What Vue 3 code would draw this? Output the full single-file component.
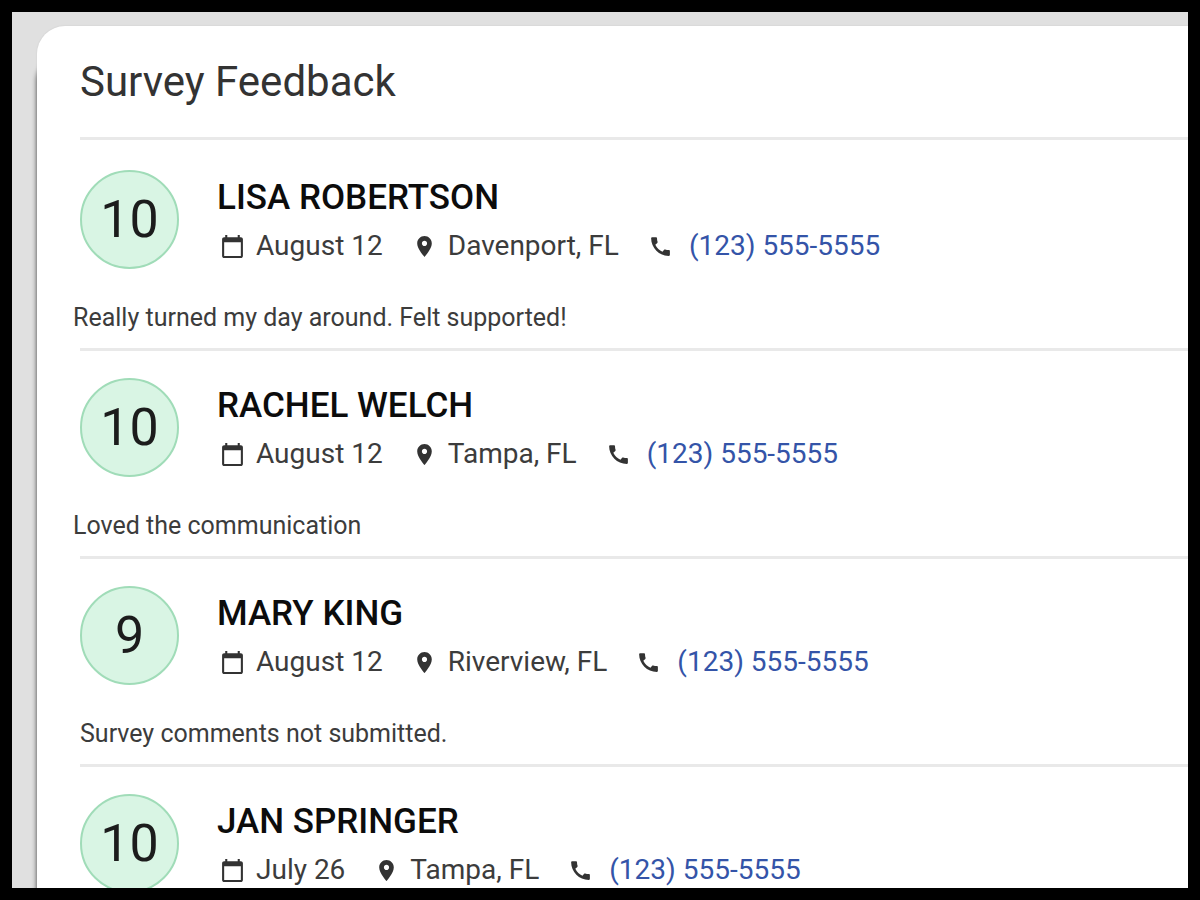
<template>
  <main class="frame">
    <section class="card">
      <h1 class="title">Survey Feedback</h1>
      <ul class="list">
        <li v-for="item in feedback" :key="item.name" class="row">
          <div class="summary">
            <div class="score">{{ item.score }}</div>
            <div class="person">
              <h2 class="name">{{ item.name }}</h2>
              <div class="meta">
                <span class="meta-item">
                  <svg class="icon" viewBox="0 0 24 24" aria-hidden="true"><path :d="icons.calendar" /></svg>
                  {{ item.date }}
                </span>
                <span class="meta-item">
                  <svg class="icon" viewBox="0 0 24 24" aria-hidden="true"><path :d="icons.pin" /></svg>
                  {{ item.place }}
                </span>
                <span class="meta-item call">
                  <svg class="icon" viewBox="0 0 24 24" aria-hidden="true"><path :d="icons.phone" /></svg>
                  <a class="phone" :href="telHref(item.phone)">{{ item.phone }}</a>
                </span>
              </div>
            </div>
          </div>
          <p v-if="item.comment" class="comment" :class="{ empty: !item.submitted }">{{ item.comment }}</p>
        </li>
      </ul>
    </section>
  </main>
</template>

<script setup>
import { ref } from 'vue'

const feedback = ref([
  { score: 10, name: 'LISA ROBERTSON', date: 'August 12', place: 'Davenport, FL', phone: '(123) 555-5555', submitted: true, comment: 'Really turned my day around. Felt supported!' },
  { score: 10, name: 'RACHEL WELCH', date: 'August 12', place: 'Tampa, FL', phone: '(123) 555-5555', submitted: true, comment: 'Loved the communication' },
  { score: 9, name: 'MARY KING', date: 'August 12', place: 'Riverview, FL', phone: '(123) 555-5555', submitted: false, comment: 'Survey comments not submitted.' },
  { score: 10, name: 'JAN SPRINGER', date: 'July 26', place: 'Tampa, FL', phone: '(123) 555-5555', submitted: false, comment: '' }
])

const icons = {
  calendar: 'M20 3h-1V1h-2v2H7V1H5v2H4c-1.1 0-2 .9-2 2v16c0 1.1.9 2 2 2h16c1.1 0 2-.9 2-2V5c0-1.1-.9-2-2-2zm0 18H4V8h16v13z',
  pin: 'M12 2C8.13 2 5 5.13 5 9c0 5.25 7 13 7 13s7-7.75 7-13c0-3.87-3.13-7-7-7zm0 9.5c-1.38 0-2.5-1.12-2.5-2.5s1.12-2.5 2.5-2.5 2.5 1.12 2.5 2.5-1.12 2.5-2.5 2.5z',
  phone: 'M20.01 15.38c-1.23 0-2.42-.2-3.53-.56-.35-.12-.74-.03-1.01.24l-1.57 1.97c-2.83-1.35-5.48-3.9-6.89-6.83l1.95-1.66c.27-.28.35-.67.24-1.02-.37-1.11-.56-2.3-.56-3.53 0-.54-.45-.99-.99-.99H4.19C3.65 3 3 3.24 3 3.99 3 13.28 10.73 21 20.01 21c.71 0 .99-.63.99-1.18v-3.45c0-.54-.45-.99-.99-.99z'
}

function telHref(phone) {
  return 'tel:' + phone.replace(/\D/g, '')
}
</script>

<style>
body { margin: 0; background: #000; }
</style>

<style scoped>
.frame {
  box-sizing: border-box;
  height: 100vh;
  overflow: hidden;
  padding: 14px 0 0 25px;
  border: 12px solid #000;
  background: #e0e0e0;
  font-family: Roboto, "Liberation Sans", sans-serif;
  color: #3c3c3c;
}

.card {
  min-height: 100%;
  padding-left: 43px;
  border-radius: 28px 0 0 0;
  background: #fff;
  box-shadow: -1px 28px 4px rgba(0, 0, 0, 0.5), 0 0 2px rgba(0, 0, 0, 0.1);
}

.title {
  margin: 0;
  padding: 30px 0 29px;
  border-bottom: 3px solid #e9e9e9;
  font-size: 42px;
  font-weight: 400;
  line-height: 52px;
  color: #333;
}

.list {
  margin: 0;
  padding: 3px 0 0;
  list-style: none;
}

.row {
  padding: 27px 0 14px;
  border-bottom: 3px solid #e9e9e9;
}

.summary {
  display: flex;
  align-items: center;
  gap: 38px;
}

.score {
  box-sizing: border-box;
  display: flex;
  align-items: center;
  justify-content: center;
  flex: none;
  width: 99px;
  height: 99px;
  border: 2px solid #a0dcb8;
  border-radius: 50%;
  background: #d9f5e4;
  font-size: 52px;
  color: #1c1c1c;
}

.person { padding-top: 1px; }

.name {
  margin: 0 0 8px;
  font-size: 35px;
  font-weight: 500;
  line-height: 44px;
  color: #0c0c0c;
}

.meta {
  display: flex;
  gap: 29px;
  padding-left: 3px;
  font-size: 28px;
  line-height: 36px;
  white-space: nowrap;
}

.meta-item {
  display: flex;
  align-items: center;
  gap: 11px;
}

.icon {
  flex: none;
  width: 25px;
  height: 25px;
  fill: #333;
}

.call { gap: 16px; }

.phone {
  color: #3454a8;
  text-decoration: none;
}

.comment {
  margin: 33px 0 0 -7px;
  font-size: 25px;
  line-height: 32px;
}

.comment.empty { margin-left: 0; }
</style>
